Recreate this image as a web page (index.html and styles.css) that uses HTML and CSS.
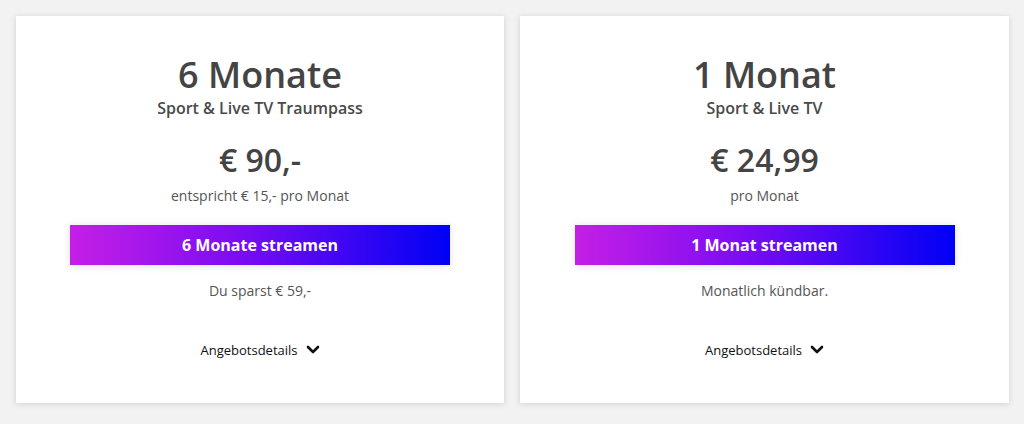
FILE: index.html
```html
<!DOCTYPE html>
<html lang="de">
<head>
<meta charset="utf-8">
<link rel="stylesheet" href="styles.css">
</head>
<body>
<div class="wrap">
  <div class="card">
    <h2 class="title">6 Monate</h2>
    <div class="subtitle">Sport &amp; Live TV Traumpass</div>
    <div class="price">€ 90,-</div>
    <div class="note">entspricht € 15,- pro Monat</div>
    <a class="btn">6 Monate streamen</a>
    <div class="info">Du sparst € 59,-</div>
    <div class="details">Angebotsdetails
      <svg class="chev" viewBox="0 0 14 10" width="14" height="10"><path d="M2 2 L7 7 L12 2" fill="none" stroke="#111" stroke-width="2.6" stroke-linecap="round" stroke-linejoin="round"/></svg>
    </div>
  </div>
  <div class="card">
    <h2 class="title">1 Monat</h2>
    <div class="subtitle">Sport &amp; Live TV</div>
    <div class="price">€ 24,99</div>
    <div class="note">pro Monat</div>
    <a class="btn">1 Monat streamen</a>
    <div class="info">Monatlich kündbar.</div>
    <div class="details">Angebotsdetails
      <svg class="chev" viewBox="0 0 14 10" width="14" height="10"><path d="M2 2 L7 7 L12 2" fill="none" stroke="#111" stroke-width="2.6" stroke-linecap="round" stroke-linejoin="round"/></svg>
    </div>
  </div>
</div>
</body>
</html>
```
FILE: styles.css
```css
* { box-sizing: border-box; }
html, body { margin: 0; padding: 0; }
body {
  background: #f2f2f2;
  font-family: "Open Sans", "Noto Sans", sans-serif;
  color: #4a4a4a;
  width: 1024px;
  height: 424px;
  overflow: hidden;
}
.wrap {
  display: grid;
  grid-template-columns: 488px 489px;
  gap: 16px;
  padding: 16px 0 0 16px;
}
.card {
  background: #fff;
  height: 387px;
  box-shadow: 0 1px 6px rgba(0,0,0,0.14);
  display: flex;
  flex-direction: column;
  align-items: center;
  text-align: center;
  padding-top: 38px;
}
.title {
  margin: 0;
  font-size: 36px;
  line-height: 42px;
  font-weight: 600;
  color: #444;
}
.subtitle {
  margin-top: 1px;
  font-size: 16px;
  line-height: 22px;
  font-weight: 600;
  color: #4a4a4a;
}
.price {
  margin-top: 21px;
  font-size: 32px;
  line-height: 40px;
  font-weight: 600;
  color: #444;
}
.note {
  margin-top: 6px;
  font-size: 14px;
  line-height: 20px;
  color: #555;
}
.btn {
  margin-top: 19px;
  width: 380px;
  height: 40px;
  display: flex;
  align-items: center;
  justify-content: center;
  background: linear-gradient(90deg, #c51fe6 0%, #7a0cf2 45%, #0000f5 100%);
  color: #fff;
  font-size: 16px;
  font-weight: 700;
  box-shadow: 0 1px 8px rgba(0,0,0,0.12);
}
.info {
  margin-top: 16px;
  font-size: 14px;
  line-height: 20px;
  color: #555;
}
.details {
  margin-top: 39px;
  font-size: 13px;
  line-height: 20px;
  color: #111;
  display: flex;
  align-items: center;
  gap: 8px;
}
.chev { display: block; }
```
